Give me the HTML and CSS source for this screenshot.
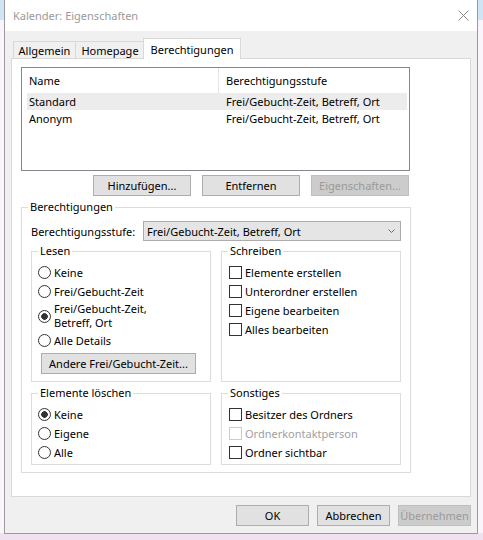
FILE: index.html
```html
<!DOCTYPE html>
<html lang="de">
<head>
<meta charset="utf-8">
<title>Kalender: Eigenschaften</title>
<link rel="stylesheet" href="styles.css">
</head>
<body>
<div class="dialog">
  <div class="titlebar">
    <span class="title">Kalender: Eigenschaften</span>
    <svg class="close" width="11" height="11" viewBox="0 0 11 11"><path d="M0.5 0.5 L10.5 10.5 M10.5 0.5 L0.5 10.5" stroke="#8a8a8a" stroke-width="1" fill="none"/></svg>
  </div>
  <div class="client">
    <div class="tabs">
      <div class="tab t1">Allgemein</div>
      <div class="tab t2">Homepage</div>
      <div class="tab active">Berechtigungen</div>
    </div>
    <div class="panel">
      <div class="list">
        <div class="lhead"><div class="c1">Name</div><div class="c2">Berechtigungsstufe</div></div>
        <div class="lrow selected"><div class="c1">Standard</div><div class="c2">Frei/Gebucht-Zeit, Betreff, Ort</div></div>
        <div class="lrow"><div class="c1">Anonym</div><div class="c2">Frei/Gebucht-Zeit, Betreff, Ort</div></div>
      </div>
      <div class="list-actions">
        <button type="button" class="btn w98">Hinzufügen...</button>
        <button type="button" class="btn w98">Entfernen</button>
        <button type="button" class="btn w98 disabled">Eigenschaften...</button>
      </div>
      <fieldset class="group main">
        <legend>Berechtigungen</legend>
        <div class="level-row">
          <span class="level-label">Berechtigungsstufe:</span>
          <div class="combo">
            <span class="combo-text">Frei/Gebucht-Zeit, Betreff, Ort</span>
            <svg class="chev" width="7" height="4" viewBox="0 0 7 4"><path d="M0.5 0.5 L3.5 3.5 L6.5 0.5" stroke="#6d6d6d" stroke-width="1" fill="none"/></svg>
          </div>
        </div>
        <div class="grid">
          <fieldset class="group sub">
            <legend>Lesen</legend>
            <div class="opt"><span class="radio"></span><span>Keine</span></div>
            <div class="opt"><span class="radio"></span><span>Frei/Gebucht-Zeit</span></div>
            <div class="opt tall"><span class="radio on"></span><span class="two">Frei/Gebucht-Zeit,<br>Betreff, Ort</span></div>
            <div class="opt"><span class="radio"></span><span>Alle Details</span></div>
            <button type="button" class="btn other">Andere Frei/Gebucht-Zeit...</button>
          </fieldset>
          <fieldset class="group sub">
            <legend>Schreiben</legend>
            <div class="opt"><span class="check"></span><span>Elemente erstellen</span></div>
            <div class="opt"><span class="check"></span><span>Unterordner erstellen</span></div>
            <div class="opt"><span class="check"></span><span>Eigene bearbeiten</span></div>
            <div class="opt"><span class="check"></span><span>Alles bearbeiten</span></div>
          </fieldset>
          <fieldset class="group sub">
            <legend>Elemente löschen</legend>
            <div class="opt"><span class="radio on"></span><span>Keine</span></div>
            <div class="opt"><span class="radio"></span><span>Eigene</span></div>
            <div class="opt"><span class="radio"></span><span>Alle</span></div>
          </fieldset>
          <fieldset class="group sub">
            <legend>Sonstiges</legend>
            <div class="opt"><span class="check"></span><span>Besitzer des Ordners</span></div>
            <div class="opt off"><span class="check"></span><span>Ordnerkontaktperson</span></div>
            <div class="opt"><span class="check"></span><span>Ordner sichtbar</span></div>
          </fieldset>
        </div>
      </fieldset>
    </div>
    <div class="footer">
      <button type="button" class="btn w73">OK</button>
      <button type="button" class="btn w73">Abbrechen</button>
      <button type="button" class="btn w73 disabled">Übernehmen</button>
    </div>
  </div>
</div>
</body>
</html>
```

FILE: styles.css
```css
* { box-sizing: border-box; }
html, body { margin: 0; padding: 0; }
body {
  width: 483px;
  height: 540px;
  overflow: hidden;
  font-family: "Noto Sans", "Open Sans", sans-serif;
  font-size: 11px;
  color: #000;
  background: linear-gradient(#cfe5f6 0 20px, #faf5fa 20px 533px, #efe1f0 533px);
}

.dialog {
  margin-left: 4px;
  width: 474px;
  height: 534px;
  border: 1px solid #9b9b9b;
  border-top: none;
  background: #f0f0f0;
  display: flex;
  flex-direction: column;
}

.titlebar {
  height: 31px;
  flex: none;
  background: #fff;
  display: flex;
  align-items: center;
  padding: 0 8px;
}
.title { color: #9a9a9a; font-size: 11px; }
.close { margin-left: auto; }

.client {
  flex: 1;
  display: flex;
  flex-direction: column;
  padding: 7px 6px;
}

.tabs {
  height: 20px;
  flex: none;
  display: flex;
  align-items: flex-end;
  padding-left: 2px;
}
.tab {
  height: 17px;
  border: 1px solid #d9d9d9;
  border-bottom: none;
  background: #f0f0f0;
  display: flex;
  align-items: center;
  justify-content: center;
}
.tab.t1 { width: 63px; }
.tab.t2 { width: 70px; margin-left: -1px; }
.tab.active {
  width: 98px;
  height: 21px;
  margin-left: -2px;
  margin-bottom: -1px;
  background: #fff;
  position: relative;
  z-index: 1;
}

.panel {
  height: 439px;
  flex: none;
  background: #fff;
  border: 1px solid #d9d9d9;
  padding: 8px 0 0 9px;
  display: flex;
  flex-direction: column;
  align-items: flex-start;
}

.list {
  width: 389px;
  height: 104px;
  border: 1px solid #828790;
  background: #fff;
}
.lhead { height: 25px; display: flex; }
.lhead .c1 {
  width: 197px;
  border-right: 1px solid #e5e5e5;
  padding-left: 7px;
  display: flex;
  align-items: center;
}
.lhead .c2 { padding-left: 7px; display: flex; align-items: center; }
.lrow {
  height: 17px;
  margin: 0 2px 0 5px;
  display: flex;
  align-items: center;
}
.lrow.selected { background: #ececec; }
.lrow .c1 { width: 199px; padding-left: 2px; }

.btn {
  height: 21px;
  border: 1px solid #adadad;
  background: #e1e1e1;
  font-family: inherit;
  font-size: 11px;
  color: #000;
  padding: 0;
  margin: 0;
  display: flex;
  align-items: center;
  justify-content: center;
}
.btn.disabled { background: #cccccc; border-color: #bfbfbf; color: #9a9a9a; }
.w98 { width: 98px; }
.w73 { width: 73px; }

.list-actions {
  width: 388px;
  margin-top: 4px;
  display: flex;
  justify-content: flex-end;
  gap: 11px;
}

.group {
  margin: 0;
  min-width: 0;
  border: 1px solid #dcdcdc;
}
.group legend {
  padding: 0 2px;
  line-height: 14px;
  height: 14px;
}
.group.main {
  width: 390px;
  margin-top: 4px;
  padding: 0 9px 7px 9px;
}
.group.main > legend { margin-left: -3px; }
.group.sub { padding: 5px 6px 2px 6px; }
.group.sub > legend { margin-left: 0; }

.level-row {
  margin-top: 7px;
  height: 20px;
  display: flex;
  align-items: center;
  justify-content: space-between;
}
.combo {
  width: 258px;
  height: 20px;
  border: 1px solid #acacac;
  background: #e5e5e5;
  display: flex;
  align-items: center;
  padding: 0 5px 0 3px;
}
.chev { margin-left: auto; }

.grid {
  margin-top: 3px;
  display: grid;
  grid-template-columns: 180px 180px;
  column-gap: 10px;
  row-gap: 4px;
}

.opt { height: 19px; display: flex; align-items: center; }
.opt.tall { height: 30px; }
.two { line-height: 14px; }
.radio {
  flex: none;
  width: 13px;
  height: 13px;
  border: 1px solid #333;
  border-radius: 50%;
  background: #fff;
  margin-right: 3px;
}
.radio.on { background: radial-gradient(circle, #333 0 3px, #fff 3.6px); }
.check {
  flex: none;
  width: 13px;
  height: 13px;
  border: 1px solid #333;
  background: #fff;
  margin: 0 3px 0 1px;
}
.opt.off { color: #a0a0a0; }
.opt.off .check { border-color: #cccccc; }

.btn.other { width: 155px; margin: 3px 0 5px 3px; }

.footer {
  margin-top: 8px;
  display: flex;
  justify-content: flex-end;
  gap: 8px;
}
```
